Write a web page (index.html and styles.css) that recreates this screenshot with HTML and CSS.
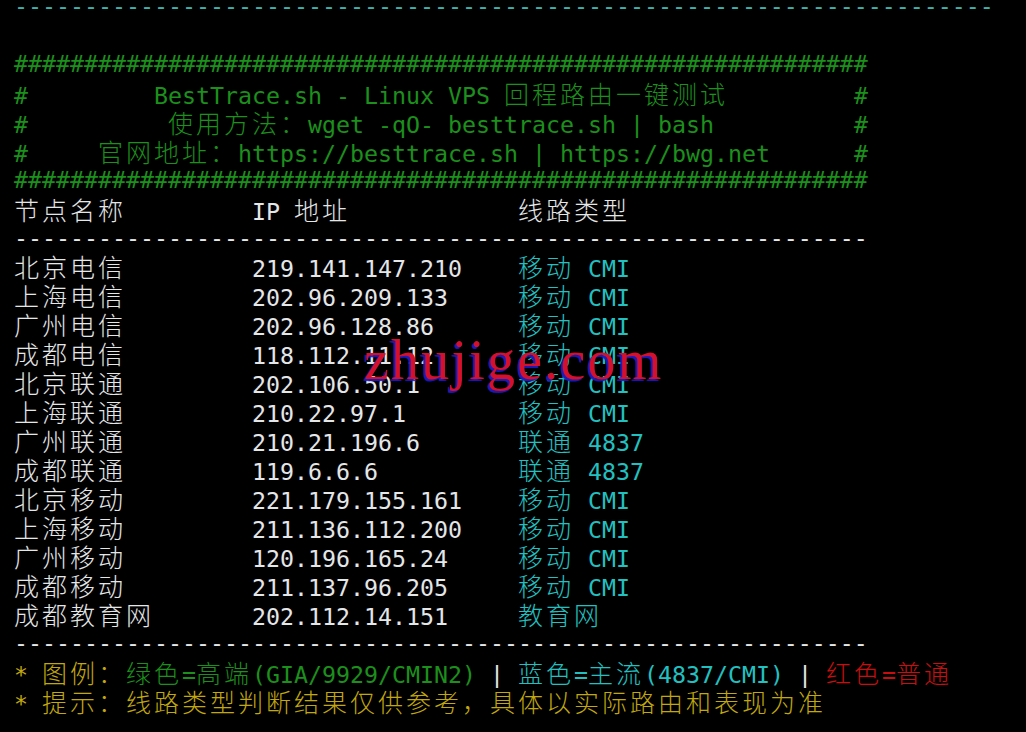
FILE: index.html
```html
<!DOCTYPE html>
<html lang="zh-CN">
<head>
<meta charset="utf-8">
<title>BestTrace</title>
<link rel="stylesheet" href="styles.css">
</head>
<body>
<div class="screen">
  <div class="term">
    <div class="ln teal">----------------------------------------------------------------------</div>
    <div class="ln"></div>
    <div class="ln g">#############################################################</div>
    <div class="ln g">#         BestTrace.sh - Linux VPS <span class="c">回程路由一键测试</span>         #</div>
    <div class="ln g">#          <span class="c">使用方法：</span>wget -qO- besttrace.sh | bash          #</div>
    <div class="ln g">#     <span class="c">官网地址：</span>https://besttrace.sh | https://bwg.net      #</div>
    <div class="ln g">#############################################################</div>
    <div class="ln w"><span class="c">节点名称</span>         IP <span class="c">地址</span>            <span class="c">线路类型</span></div>
    <div class="ln w">-------------------------------------------------------------</div>
    <div class="ln w"><span class="c">北京电信</span>         219.141.147.210    <span class="cy"><span class="c">移动</span> CMI</span></div>
    <div class="ln w"><span class="c">上海电信</span>         202.96.209.133     <span class="cy"><span class="c">移动</span> CMI</span></div>
    <div class="ln w"><span class="c">广州电信</span>         202.96.128.86      <span class="cy"><span class="c">移动</span> CMI</span></div>
    <div class="ln w"><span class="c">成都电信</span>         118.112.11.12      <span class="cy"><span class="c">移动</span> CMI</span></div>
    <div class="ln w"><span class="c">北京联通</span>         202.106.50.1       <span class="cy"><span class="c">移动</span> CMI</span></div>
    <div class="ln w"><span class="c">上海联通</span>         210.22.97.1        <span class="cy"><span class="c">移动</span> CMI</span></div>
    <div class="ln w"><span class="c">广州联通</span>         210.21.196.6       <span class="cy"><span class="c">联通</span> 4837</span></div>
    <div class="ln w"><span class="c">成都联通</span>         119.6.6.6          <span class="cy"><span class="c">联通</span> 4837</span></div>
    <div class="ln w"><span class="c">北京移动</span>         221.179.155.161    <span class="cy"><span class="c">移动</span> CMI</span></div>
    <div class="ln w"><span class="c">上海移动</span>         211.136.112.200    <span class="cy"><span class="c">移动</span> CMI</span></div>
    <div class="ln w"><span class="c">广州移动</span>         120.196.165.24     <span class="cy"><span class="c">移动</span> CMI</span></div>
    <div class="ln w"><span class="c">成都移动</span>         211.137.96.205     <span class="cy"><span class="c">移动</span> CMI</span></div>
    <div class="ln w"><span class="c">成都教育网</span>       202.112.14.151     <span class="cy"><span class="c">教育网</span></span></div>
    <div class="ln w">-------------------------------------------------------------</div>
    <div class="ln"><span class="y">* <span class="c">图例：</span></span><span class="g"><span class="c">绿色</span>=<span class="c">高端</span>(GIA/9929/CMIN2)</span><span class="w"> | </span><span class="cy"><span class="c">蓝色</span>=<span class="c">主流</span>(4837/CMI)</span><span class="w"> | </span><span class="r"><span class="c">红色</span>=<span class="c">普通</span></span></div>
    <div class="ln y">* <span class="c">提示：线路类型判断结果仅供参考，具体以实际路由和表现为准</span></div>
  </div>
  <div class="wm">zhujige.com</div>
</div>
</body>
</html>
```
FILE: styles.css
```css
html, body {
  margin: 0;
  padding: 0;
  background: #000;
  height: 100%;
  overflow: hidden;
}

.screen {
  position: relative;
  width: 1026px;
  height: 732px;
  background: #000;
  overflow: hidden;
}

.term {
  margin-top: -8px;
  padding-left: 14px;
  font-family: "DejaVu Sans Mono", monospace;
  font-size: 23.26px;
  line-height: 28.95px;
}

.ln {
  height: 28.95px;
  white-space: pre;
}

.c {
  font-family: "Noto Sans CJK SC", sans-serif;
  font-weight: 300;
  font-size: 25px;
  letter-spacing: 3px;
}

.teal { color: #3db3ac; }
.g { color: #1c8f1c; }
.w { color: #e4e6e8; }
.cy { color: #22c0c0; }
.y { color: #c2a80c; }
.r { color: #c80e0e; }

.wm {
  position: absolute;
  left: 364px;
  top: 328px;
  font-family: "Liberation Serif", serif;
  font-size: 56px;
  line-height: 64px;
  letter-spacing: 2.2px;
  color: #d4102c;
  text-shadow: -2px 2px 1px #1c1cc0;
  white-space: pre;
}
```
